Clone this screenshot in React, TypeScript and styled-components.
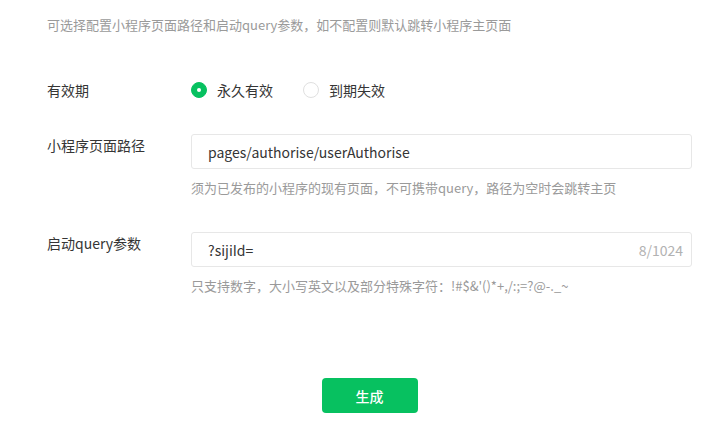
import React, { useState } from 'react'
import styled, { createGlobalStyle } from 'styled-components'

const GlobalStyle = createGlobalStyle`
  html, body {
    margin: 0;
    padding: 0;
    background: #fff;
  }
  body {
    font-family: "Noto Sans CJK SC", "Noto Sans", sans-serif;
    color: #353535;
  }
`

const Page = styled.div`
  width: 645px;
  padding: 15px 0 0 47px;
`

const Desc = styled.p`
  margin: 0 0 45px;
  font-size: 13px;
  line-height: 20px;
  color: #9a9a9a;
`

const Row = styled.div`
  display: grid;
  grid-template-columns: 144px 501px;
  margin-bottom: 34px;
`

const Label = styled.div<{ $offset?: number }>`
  font-size: 14px;
  line-height: 20px;
  padding-top: ${(p) => p.$offset ?? 0}px;
  color: #353535;
`

const RadioGroup = styled.div`
  display: flex;
  align-items: center;
  gap: 30px;
`

const RadioItem = styled.label`
  display: flex;
  align-items: center;
  gap: 10px;
  font-size: 14px;
  line-height: 20px;
  cursor: pointer;
`

const RadioDot = styled.span<{ $checked: boolean }>`
  box-sizing: border-box;
  width: 16px;
  height: 16px;
  border-radius: 50%;
  border: 1px solid ${(p) => (p.$checked ? '#07c160' : '#e0e0e0')};
  background: ${(p) => (p.$checked ? '#07c160' : '#fff')};
  display: flex;
  align-items: center;
  justify-content: center;

  &::after {
    content: '';
    width: 4px;
    height: 4px;
    border-radius: 50%;
    background: #fff;
    display: ${(p) => (p.$checked ? 'block' : 'none')};
  }
`

const Field = styled.div`
  display: flex;
  flex-direction: column;
`

const InputBox = styled.div`
  box-sizing: border-box;
  height: 35px;
  border: 1px solid #e7e7e7;
  border-radius: 3px;
  display: flex;
  align-items: center;
  padding: 0 8px 0 16px;
`

const Input = styled.input`
  flex: 1;
  border: none;
  outline: none;
  padding: 0;
  font-family: inherit;
  font-size: 14px;
  color: #353535;
  background: transparent;
`

const Counter = styled.span`
  font-size: 14px;
  color: #b2b2b2;
`

const Hint = styled.div`
  margin-top: 9px;
  font-size: 13px;
  line-height: 20px;
  color: #9a9a9a;
`

const Footer = styled.div`
  display: flex;
  justify-content: center;
  padding-top: 48px;
`

const Button = styled.button`
  width: 96px;
  height: 35px;
  border: none;
  border-radius: 4px;
  background: #07c160;
  color: #fff;
  font-family: inherit;
  font-size: 14px;
  font-weight: 500;
  cursor: pointer;
`

export default function App() {
  const [forever, setForever] = useState(true)
  const [path, setPath] = useState('pages/authorise/userAuthorise')
  const [query, setQuery] = useState('?sijiId=')

  return (
    <>
      <GlobalStyle />
      <Page>
        <Desc>可选择配置小程序页面路径和启动query参数，如不配置则默认跳转小程序主页面</Desc>

        <Row>
          <Label>有效期</Label>
          <RadioGroup>
            <RadioItem onClick={() => setForever(true)}>
              <RadioDot $checked={forever} />
              永久有效
            </RadioItem>
            <RadioItem onClick={() => setForever(false)}>
              <RadioDot $checked={!forever} />
              到期失效
            </RadioItem>
          </RadioGroup>
        </Row>

        <Row>
          <Label $offset={1}>小程序页面路径</Label>
          <Field>
            <InputBox>
              <Input value={path} onChange={(e) => setPath(e.target.value)} />
            </InputBox>
            <Hint>须为已发布的小程序的现有页面，不可携带query，路径为空时会跳转主页</Hint>
          </Field>
        </Row>

        <Row>
          <Label $offset={1}>启动query参数</Label>
          <Field>
            <InputBox>
              <Input value={query} onChange={(e) => setQuery(e.target.value)} />
              <Counter>{query.length}/1024</Counter>
            </InputBox>
            <Hint>只支持数字，大小写英文以及部分特殊字符：!#$&amp;'()*+,/:;=?@-._~</Hint>
          </Field>
        </Row>

        <Footer>
          <Button>生成</Button>
        </Footer>
      </Page>
    </>
  )
}
